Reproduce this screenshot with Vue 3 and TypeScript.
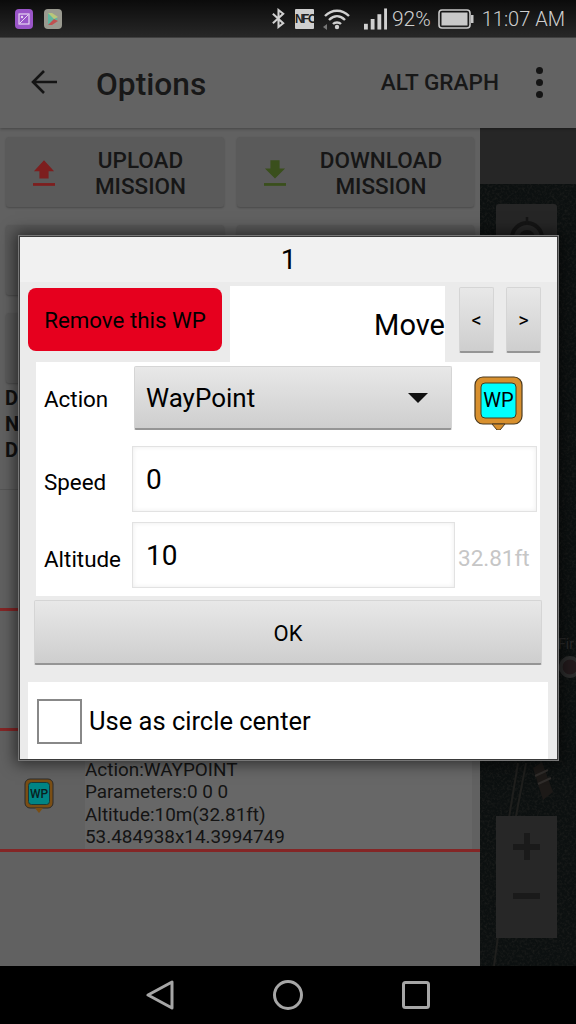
<script setup lang="ts">
const missionLines: string[] = ['Action:WAYPOINT', 'Parameters:0 0 0', 'Altitude:10m(32.81ft)', '53.484938x14.3994749']
</script>

<template>
  <div class="screen">
    <header class="status">
      <div class="status-left">
        <svg class="app-icon" viewBox="0 0 18 20"><rect width="18" height="20" rx="4" fill="#9a55c8"/><rect x="4" y="5" width="10" height="10" fill="none" stroke="#e6d5f2" stroke-width="1.2"/><path d="M5 14 13 6" stroke="#e6d5f2" stroke-width="1"/><circle cx="7" cy="8" r="1.2" fill="#e6d5f2"/></svg>
        <svg class="app-icon" viewBox="0 0 18 20"><rect width="18" height="20" rx="4" fill="#9a9a90"/><path d="M4 4 14 10 4 16Z" fill="#5fb6a0"/><path d="M4 4 10 10 14 8 8 4Z" fill="#b9c77a"/><path d="M4 16 10 10 14 12 8 16Z" fill="#c05050"/></svg>
      </div>
      <div class="status-right">
        <svg class="s-bt" viewBox="0 0 16 22"><path d="M2 6 13 16 8 20V2L13 6 2 16" fill="none" stroke="#d0d0d0" stroke-width="2.2"/></svg>
        <span class="nfc">NFC</span>
        <svg class="s-wifi" viewBox="0 0 28 22"><path d="M2 8C9 1 19 1 26 8M6 12C11 7 17 7 22 12M10 16C12 14 16 14 18 16" fill="none" stroke="#d0d0d0" stroke-width="2.4"/><circle cx="14" cy="19" r="2.2" fill="#d0d0d0"/><path d="M0 19 4 16V22Z" fill="#777"/></svg>
        <svg class="s-signal" viewBox="0 0 24 22"><rect x="0" y="16" width="4" height="6" fill="#d0d0d0"/><rect x="7" y="11" width="4" height="11" fill="#d0d0d0"/><rect x="14" y="6" width="4" height="16" fill="#d0d0d0"/><rect x="21" y="0" width="3" height="22" fill="#d0d0d0"/></svg>
        <span class="pct">92%</span>
        <svg class="s-batt" viewBox="0 0 36 20"><rect x="1" y="1" width="31" height="18" rx="3" fill="none" stroke="#c8c8c8" stroke-width="1.6"/><rect x="3.5" y="3.5" width="26" height="13" fill="#c8c8c8"/><rect x="33" y="6" width="2.5" height="8" fill="#c8c8c8"/></svg>
        <span class="clock">11:07 AM</span>
      </div>
    </header>

    <div class="appbar">
      <svg class="back" viewBox="0 0 26 24"><path d="M26 12H2M13 1 2 12 13 23" fill="none" stroke="#141414" stroke-width="2.6"/></svg>
      <span class="title">Options</span>
      <span class="alt">ALT GRAPH</span>
      <div class="dots"><i></i><i></i><i></i></div>
    </div>

    <main class="body">
      <section class="panel">
        <div class="btn-grid">
          <div class="mbtn">
            <svg viewBox="0 0 24 28"><path d="M12 0 23 12H17V20H7V12H1Z" fill="#7d1e1e"/><rect y="25" width="24" height="3" fill="#7d1e1e"/></svg>
            <span>UPLOAD<br />MISSION</span>
          </div>
          <div class="mbtn">
            <svg viewBox="0 0 24 28"><path d="M7 0H17V9H23L12 20 1 9H7Z" fill="#3a4f1c"/><rect y="25" width="24" height="3" fill="#3a4f1c"/></svg>
            <span>DOWNLOAD<br />MISSION</span>
          </div>
          <div class="mbtn"></div>
          <div class="mbtn"></div>
          <div class="mbtn"></div>
          <div class="mbtn"></div>
        </div>
        <div class="info">D<br />N<br />D</div>
        <div class="thin"></div>
        <div class="rule r1"></div>
        <div class="rule r2"></div>
        <div class="mission">
          <svg class="pin-sm" viewBox="0 0 30 36">
            <rect x="1" y="1" width="28" height="29" rx="5" fill="#7a4e14" stroke="#2a2a2a"/>
            <path d="M11 30H19L15 35Z" fill="#7a4e14"/>
            <rect x="4.500" y="4.500" width="21" height="22" rx="3" fill="#008585" stroke="#1a3a3a"/>
            <text x="15" y="20" text-anchor="middle" class="pin-txt-sm">WP</text>
          </svg>
          <div class="mission-text">
            <div v-for="line in missionLines" :key="line">{{ line }}</div>
          </div>
        </div>
        <div class="rule r3"></div>
      </section>

      <section class="map">
        <svg class="noise" width="96" height="838">
          <defs>
            <filter id="grain" x="0" y="0" width="100%" height="100%" color-interpolation-filters="sRGB">
              <feTurbulence type="fractalNoise" baseFrequency="0.4" numOctaves="3" seed="7" />
              <feColorMatrix values="0 0 0 0 0.14  0 0 0 0 0.14  0 0 0 0 0.13  1.3 0 0 0 -0.56" />
            </filter>
          </defs>
          <rect y="56" width="96" height="782" filter="url(#grain)" />
          <path d="M53 640 62 634 73 664 63 672Z" fill="#1c1917" />
          <path d="M55 648 68 642M58 656 71 650" stroke="#302d2b" stroke-width="2" />
          <path d="M46 635 30 720 14 838M38 635 24 720" stroke="#1f1f1d" stroke-width="2" fill="none" />
        </svg>
        <div class="band"></div>
        <div class="locate">
          <svg viewBox="0 0 61 60"><circle cx="31" cy="34" r="15" fill="none" stroke="#151515" stroke-width="4"/><circle cx="31" cy="34" r="8" fill="#151515"/><path d="M31 13V21" stroke="#151515" stroke-width="2.500"/></svg>
        </div>
        <div class="zoombox"><span class="plus"></span><span class="minus"></span></div>
        <div class="map-label">Fir<br />JH</div>
        <div class="map-dot"></div>
      </section>

      <div class="dialog">
        <div class="d-title">1</div>
        <div class="d-top">
          <div class="remove">Remove this WP</div>
          <div class="move">Move</div>
          <div class="nav-btns">
            <div class="raised small">&lt;</div>
            <div class="raised small">&gt;</div>
          </div>
        </div>
        <div class="form">
          <div class="f-row r-action">
            <label>Action</label>
            <div class="raised spinner"><span>WayPoint</span><i class="caret"></i></div>
            <svg class="pin" viewBox="0 0 50 54">
              <rect x="1" y="1" width="47" height="47" rx="8" fill="#d8902e" stroke="#4a3a20" stroke-width="1.2"/>
              <path d="M18 48H31L26 54H23Z" fill="#d8902e" stroke="#4a3a20"/>
              <rect x="7" y="7" width="35" height="35" rx="4" fill="#00ffff" stroke="#4a3a20"/>
              <text x="24.500" y="31" text-anchor="middle" class="pin-txt">WP</text>
            </svg>
          </div>
          <div class="f-row r-speed">
            <label>Speed</label>
            <div class="field wide">0</div>
          </div>
          <div class="f-row r-alt">
            <label>Altitude</label>
            <div class="field narrow">10</div>
            <span class="ft">32.81ft</span>
          </div>
        </div>
        <div class="raised ok">OK</div>
        <div class="check-row">
          <span class="box"></span>
          <span class="check-label">Use as circle center</span>
        </div>
      </div>
    </main>

    <footer class="navbar">
      <svg viewBox="0 0 28 30" class="n-back"><path d="M26 2V28L2 15Z" fill="none" stroke="#a6a6a6" stroke-width="3" stroke-linejoin="round"/></svg>
      <svg viewBox="0 0 30 30" class="n-home"><circle cx="15" cy="15" r="13.500" fill="none" stroke="#a6a6a6" stroke-width="3"/></svg>
      <svg viewBox="0 0 28 28" class="n-rec"><rect x="1.500" y="1.500" width="25" height="25" rx="2" fill="none" stroke="#a6a6a6" stroke-width="3"/></svg>
    </footer>
  </div>
</template>

<style scoped>
* { box-sizing: border-box; }
.screen { width: 576px; height: 1024px; display: flex; flex-direction: column; overflow: hidden; font-family: Roboto, "Liberation Sans", sans-serif; color: #000; background: #000; }

.status { height: 38px; flex: none; display: flex; justify-content: space-between; align-items: center; padding: 0 11px 0 15px; background: linear-gradient(#0b0b0b, #272727); border-bottom: 1px solid #444; }
.status-left { display: flex; gap: 11px; }
.app-icon { width: 18px; height: 20px; display: block; }
.status-right { display: flex; align-items: center; color: #cfcfcf; }
.s-bt { width: 15px; height: 21px; margin-right: 9px; }
.nfc { width: 19px; height: 20px; background: #cfcfcf; color: #222; font: 700 12px/20px "Liberation Sans Narrow", "Liberation Sans", sans-serif; text-align: center; letter-spacing: -1.500px; border-radius: 1px; margin-right: 9px; overflow: hidden; }
.s-wifi { width: 28px; height: 22px; margin-right: 13px; }
.s-signal { width: 23px; height: 22px; margin-right: 5px; }
.pct { font-size: 21px; font-weight: 300; line-height: 22px; margin-right: 7px; }
.s-batt { width: 36px; height: 20px; margin-right: 8px; }
.clock { font-size: 20px; font-weight: 300; line-height: 22px; }

.appbar { height: 90px; flex: none; display: flex; align-items: center; background: #636363; color: #181818; padding-left: 31px; position: relative; z-index: 1; box-shadow: 0 1px 3px rgba(0,0,0,.3); }
.back { width: 26px; height: 24px; margin-right: 39px; margin-top: -2px; }
.title { font-size: 31.700px; font-weight: 500; flex: 1; padding-top: 2px; }
.alt { font-size: 22.600px; font-weight: 500; margin-right: 36px; margin-top: -2px; }
.dots { width: 10px; display: flex; flex-direction: column; gap: 5px; margin-right: 31px; margin-top: -2px; }
.dots i { width: 7px; height: 7px; border-radius: 50%; background: #141414; margin-left: 1px; display: block; }

.body { flex: 1; display: flex; position: relative; min-height: 0; }
.panel { width: 480px; flex: none; background: #616161; padding-top: 9px; position: relative; box-shadow: 0 0 4px rgba(0,0,0,.4); z-index: 0; display: flex; flex-direction: column; }
.btn-grid { display: grid; grid-template-columns: 218px 237px; column-gap: 13px; row-gap: 18px; padding-left: 6px; grid-auto-rows: 70px; }
.mbtn { background: #5a5a5a; border-radius: 3px; box-shadow: 0 1px 2px rgba(0,0,0,.25); display: flex; align-items: center; color: #161616; font-size: 22.500px; font-weight: 500; line-height: 26px; text-align: center; position: relative; padding-top: 2px; }
.mbtn svg { width: 22px; height: 28px; margin-left: 27px; flex: none; }
.mbtn span { flex: 1; padding-left: 2px; }
.info { position: absolute; left: 5px; top: 257px; font-size: 20px; font-weight: 700; line-height: 26px; color: #111; }
.thin { height: 1px; background: #555; margin-top: 106px; }
.rule { height: 3px; background: #842626; flex: none; }
.r1 { margin-top: 118px; }
.r2 { margin-top: 117px; }
.mission { height: 118px; display: flex; align-items: center; margin-right: 8px; }
.pin-sm { width: 30px; height: 36px; margin-left: 24px; margin-right: 31px; flex: none; margin-top: 12px; }
.pin-txt-sm { font: 500 12px Roboto, sans-serif; fill: #0a2020; }
.mission-text { flex: 1; align-self: stretch; background: #676767; font-size: 18.900px; line-height: 22.400px; color: #141414; padding-top: 28px; white-space: nowrap; }
.r3 { margin-top: 0; }

.map { flex: 1; position: relative; background: #0c1010; overflow: hidden; }
.noise { position: absolute; left: 0; top: 0; }
.band { position: absolute; left: 0; top: 0; right: 0; height: 56px; background: #262626; }
.locate { position: absolute; left: 16px; top: 76px; width: 61px; height: 60px; background: #262626; border-radius: 3px; }
.locate svg { width: 61px; height: 60px; display: block; }
.zoombox { position: absolute; left: 16px; top: 688px; width: 61px; height: 122px; background: #272727; display: flex; flex-direction: column; align-items: center; }
.plus { width: 27px; height: 27px; margin-top: 17px; background: linear-gradient(#1a1a1a, #1a1a1a) center / 27px 6px no-repeat, linear-gradient(#1a1a1a, #1a1a1a) center / 6px 27px no-repeat; }
.minus { width: 27px; height: 6px; background: #1a1a1a; margin-top: 33px; }
.map-label { position: absolute; left: 78px; top: 505px; font-size: 14px; line-height: 22px; color: #2a2a2a; white-space: nowrap; }
.map-dot { position: absolute; left: 79px; top: 528px; width: 22px; height: 22px; border-radius: 50%; background: radial-gradient(#231a1c 45%, #2c2c2c 50%); }

.dialog { position: absolute; left: 19px; top: 108px; width: 539px; height: 524px; background: #ebebeb; border: 1px solid #3a3a3a; outline: 1px solid #777; box-shadow: 0 0 14px 4px rgba(0,0,0,.55); overflow: hidden; display: flex; flex-direction: column; }
.d-title { height: 45px; flex: none; background: #f1f1f1; text-align: center; font-size: 28px; font-weight: 400; line-height: 46px; }
.d-top { height: 80px; flex: none; display: flex; padding-left: 8px; align-items: flex-start; }
.remove { width: 194px; height: 63px; margin-top: 6px; background: #e6001e; border-radius: 8px; font-size: 22.300px; line-height: 65px; text-align: center; }
.move { width: 215px; height: 76px; margin: 4px 0 0 8px; background: #fff; font-size: 29px; text-align: right; line-height: 79px; }
.nav-btns { display: flex; gap: 12px; margin: 5px 0 0 14px; }
.raised { background: linear-gradient(#e8e8e8, #cecece); border: 1px solid #d5d5d5; border-bottom: 2px solid #959595; border-radius: 2px; display: flex; align-items: center; justify-content: center; }
.small { width: 35px; height: 66px; font-size: 20px; }
.form { width: 504px; height: 234px; margin-left: 16px; background: #fff; flex: none; display: flex; flex-direction: column; }
.f-row { display: flex; position: relative; padding-left: 8px; }
.f-row label { font-size: 22.400px; width: 88px; flex: none; }
.r-action { height: 84px; padding-top: 4px; }
.r-action label { line-height: 66px; }
.spinner { width: 318px; height: 64px; margin-left: 2px; justify-content: space-between; padding: 0 23px 0 11px; font-size: 26px; }
.caret { width: 0; height: 0; border-left: 10px solid transparent; border-right: 10px solid transparent; border-top: 10px solid #111; }
.pin { width: 50px; height: 54px; margin: 10px 0 0 22px; flex: none; }
.pin-txt { font: 400 20px Roboto, sans-serif; fill: #000; }
.r-speed { height: 76px; }
.r-speed label { line-height: 72px; }
.r-alt { height: 66px; }
.r-alt label { line-height: 74px; }
.field { height: 66px; border: 1px solid #e2e2e2; box-shadow: inset 0 0 5px rgba(0,0,0,.08); font-size: 28px; line-height: 66px; padding-left: 13px; background: #fff; }
.wide { width: 405px; }
.narrow { width: 323px; }
.ft { font-size: 22.500px; color: #c6c6c6; margin-left: 3px; line-height: 72px; font-weight: 400; }
.ok { width: 508px; height: 65px; margin: 4px 0 0 14px; flex: none; font-size: 22px; padding-top: 2px; }
.check-row { width: 520px; height: 78px; margin: 17px 0 0 8px; flex: none; background: #fff; display: flex; align-items: flex-start; padding: 17px 0 0 9px; }
.box { width: 45px; height: 45px; border: 2px solid #888; background: #fff; flex: none; }
.check-label { font-size: 25.500px; margin-left: 7px; line-height: 44px; }

.navbar { height: 58px; flex: none; background: #000; display: flex; align-items: center; justify-content: center; position: relative; z-index: 1; }
.n-back { width: 28px; height: 30px; margin-right: 99px; }
.n-home { width: 30px; height: 30px; margin-right: 99px; }
.n-rec { width: 28px; height: 28px; }
</style>

<style>
html, body { margin: 0; background: #000; }
</style>
